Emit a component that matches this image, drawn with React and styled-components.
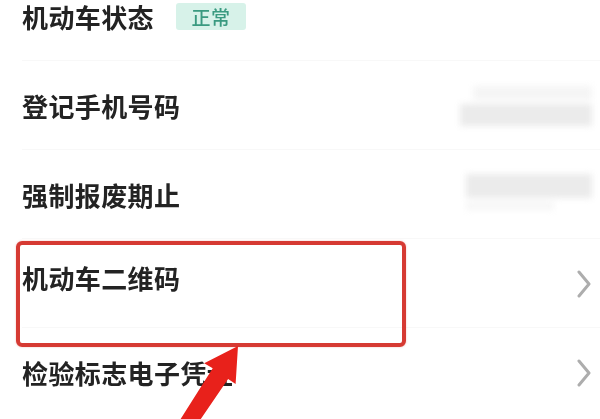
import React from 'react';
import styled, { createGlobalStyle } from 'styled-components';

const GlobalStyle = createGlobalStyle`
  html, body {
    margin: 0;
    padding: 0;
    background: #ffffff;
    overflow: hidden;
  }
  body {
    font-family: "Noto Sans CJK SC", "Noto Sans", sans-serif;
  }
`;

const Page = styled.div`
  position: relative;
  width: 600px;
  height: 419px;
  overflow: hidden;
  background: #ffffff;
`;

const List = styled.div`
  display: flex;
  flex-direction: column;
  margin-top: -28px;
`;

const Row = styled.div`
  position: relative;
  height: 89px;
  display: flex;
  align-items: center;
  justify-content: space-between;
  padding: 0 8px 0 22px;
  box-sizing: border-box;

  &::after {
    content: '';
    position: absolute;
    left: 22px;
    right: 0;
    bottom: 0;
    height: 1px;
    background: ${p => (p.$last ? 'transparent' : '#f8f8f8')};
  }
`;

const Label = styled.div`
  display: flex;
  align-items: center;
  gap: 22px;
  font-size: 26px;
  font-weight: 600;
  color: #232323;
  letter-spacing: 0.4px;
  position: relative;
  z-index: 2;
  filter: blur(0.3px);
`;

const Tag = styled.span`
  display: inline-flex;
  align-items: center;
  justify-content: center;
  width: 70px;
  height: 27px;
  border-radius: 3px;
  background: #d7f2e9;
  color: #3a9a80;
  font-size: 19px;
  font-weight: 500;
  filter: blur(0.3px);
`;

const Blurred = styled.div`
  display: flex;
  flex-direction: column;
  gap: 4px;
  width: ${p => p.$w}px;
  margin-top: ${p => p.$mt || 0}px;
  filter: blur(3px);
`;

const BlurBar = styled.div`
  height: ${p => p.$h}px;
  background: ${p => p.$c};
  width: ${p => p.$w || 100}%;
  align-self: ${p => p.$align || 'stretch'};
`;

const Chevron = styled.svg`
  width: 16px;
  height: 30px;
  filter: blur(0.4px);
`;

const Highlight = styled.div`
  position: absolute;
  left: 16px;
  top: 2px;
  width: 390px;
  height: 106px;
  box-sizing: border-box;
  border: 4px solid #d63a33;
  border-radius: 6px;
  z-index: 1;
  filter: blur(0.5px);
  box-shadow: 0 0 2px rgba(214, 58, 51, 0.35);
`;

const ArrowLayer = styled.svg`
  position: absolute;
  left: 0;
  top: 0;
  width: 600px;
  height: 419px;
  pointer-events: none;
  z-index: 3;
  filter: blur(0.5px);
`;

const ChevronIcon = () => (
  <Chevron viewBox="0 0 16 30">
    <path d="M3 3 L13 15 L3 27" fill="none" stroke="#adadad" strokeWidth="3" strokeLinecap="round" strokeLinejoin="round" />
  </Chevron>
);

export default function App() {
  return (
    <>
      <GlobalStyle />
      <Page>
        <List>
          <Row>
            <Label>
              机动车状态
              <Tag>正常</Tag>
            </Label>
          </Row>
          <Row>
            <Label>登记手机号码</Label>
            <Blurred $w={132} $mt={0}>
              <BlurBar $h={14} $c="#f5f5f5" $w={90} $align="flex-end" />
              <BlurBar $h={22} $c="#ebebeb" />
            </Blurred>
          </Row>
          <Row>
            <Label>强制报废期止</Label>
            <Blurred $w={126} $mt={-6}>
              <BlurBar $h={24} $c="#ebebeb" />
              <BlurBar $h={8} $c="#f6f6f6" $w={70} />
            </Blurred>
          </Row>
          <Row>
            <Highlight />
            <Label style={{ marginTop: -12 }}>机动车二维码</Label>
            <ChevronIcon />
          </Row>
          <Row $last>
            <Label>检验标志电子凭证</Label>
            <ChevronIcon />
          </Row>
        </List>
        <ArrowLayer viewBox="0 0 600 419">
          <polygon
            points="238,346 235.6,384.1 228.1,379.1 184.2,443.3 170.8,434.5 212.7,368.3 204.2,363.3"
            fill="#e8211b"
          />
        </ArrowLayer>
      </Page>
    </>
  );
}
